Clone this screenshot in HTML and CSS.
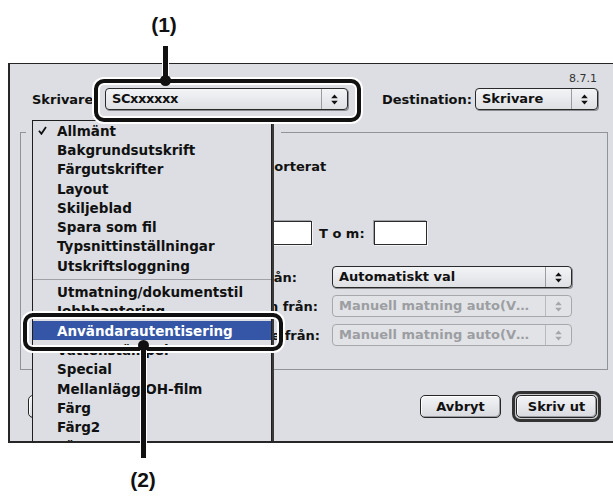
FILE: index.html
```html
<!DOCTYPE html>
<html lang="sv">
<head>
    <meta charset="UTF-8">
    <meta name="viewport" content="width=device-width, initial-scale=1.0">
    <title>Skriv ut - Användarautentisering</title>
    <link rel="stylesheet" href="styles.css">
</head>
<body>
<div class="page">

    <!-- utskriftsdialogen -->
    <div class="dialog">
        <div class="version">8.7.1</div>

        <div class="printer-row">
            <span class="printer-label">Skrivare</span>
            <div class="popup printer-popup">
                <span class="popup-text sc">SCxxxxxx</span>
                <span class="popup-arrows"><svg width="7" height="11" viewBox="0 0 7 11"><path d="M3.5 0.5L6.8 4.3H0.2Z M3.5 10.5L0.2 6.7H6.8Z"/></svg></span>
            </div>
            <span class="dest-label">Destination:</span>
            <div class="popup dest-popup">
                <span class="popup-text">Skrivare</span>
                <span class="popup-arrows"><svg width="7" height="11" viewBox="0 0 7 11"><path d="M3.5 0.5L6.8 4.3H0.2Z M3.5 10.5L0.2 6.7H6.8Z"/></svg></span>
            </div>
        </div>

        <fieldset class="panel">
            <legend class="panel-slot"></legend>

            <!-- det mesta av raderna ligger under den öppna menyn -->
            <div class="row copies-row">
                <span class="checkbox"></span>
                <span class="check-label">Sorterat</span>
            </div>

            <div class="row range-row">
                <div class="lead"></div>
                <input class="field range-from" type="text">
                <span class="to">T o m:</span>
                <input class="field range-to" type="text">
            </div>

            <div class="row source-row all-pages">
                <div class="lead">
                    <span>Alla sidor från:</span>
                </div>
                <div class="popup source-popup">
                    <span class="popup-text">Automatiskt val</span>
                    <span class="popup-arrows"><svg width="7" height="11" viewBox="0 0 7 11"><path d="M3.5 0.5L6.8 4.3H0.2Z M3.5 10.5L0.2 6.7H6.8Z"/></svg></span>
                </div>
            </div>

            <div class="row source-row first-page">
                <div class="lead">
                    <span>Första sidan från:</span>
                </div>
                <div class="popup source-popup disabled">
                    <span class="popup-text">Manuell matning auto(V…</span>
                    <span class="popup-arrows"><svg width="7" height="11" viewBox="0 0 7 11"><path d="M3.5 0.5L6.8 4.3H0.2Z M3.5 10.5L0.2 6.7H6.8Z"/></svg></span>
                </div>
            </div>

            <div class="row source-row rest-pages">
                <div class="lead">
                    <span>Återstående från:</span>
                </div>
                <div class="popup source-popup disabled">
                    <span class="popup-text">Manuell matning auto(V…</span>
                    <span class="popup-arrows"><svg width="7" height="11" viewBox="0 0 7 11"><path d="M3.5 0.5L6.8 4.3H0.2Z M3.5 10.5L0.2 6.7H6.8Z"/></svg></span>
                </div>
            </div>
        </fieldset>

        <div class="button-row">
            <button class="btn save"></button>
            <button class="btn cancel">Avbryt</button>
            <span class="default-ring"><button class="btn print">Skriv ut</button></span>
        </div>

        <!-- öppen panelmeny -->
        <ul class="menu">
            <li><span class="mark"><svg width="9" height="9" viewBox="0 0 9 9"><path d="M1 4.8L3.4 7.8L8 1" fill="none" stroke="#111" stroke-width="1.8"/></svg></span>Allmänt</li>
            <li><span class="mark"></span>Bakgrundsutskrift</li>
            <li><span class="mark"></span>Färgutskrifter</li>
            <li><span class="mark"></span>Layout</li>
            <li><span class="mark"></span>Skiljeblad</li>
            <li><span class="mark"></span>Spara som fil</li>
            <li><span class="mark"></span>Typsnittinställningar</li>
            <li><span class="mark"></span>Utskriftsloggning</li>
            <li class="sep"></li>
            <li><span class="mark"></span>Utmatning/dokumentstil</li>
            <li><span class="mark"></span>Jobbhantering</li>
            <li class="active"><span class="mark"></span>Användarautentisering</li>
            <li><span class="mark"></span>Vattenstämpel</li>
            <li><span class="mark"></span>Special</li>
            <li><span class="mark"></span>Mellanlägg OH-film</li>
            <li><span class="mark"></span>Färg</li>
            <li><span class="mark"></span>Färg2</li>
            <li><span class="mark"></span>Färg3</li>
        </ul>
    </div>

    <!-- markeringar (1) och (2) -->
    <div class="tag tag-one">(1)</div>
    <div class="callout-box box-one"></div>
    <div class="callout-line line-one"></div>
    <div class="callout-dot dot-one"></div>

    <div class="callout-box box-two"></div>
    <div class="callout-line line-two"></div>
    <div class="callout-dot dot-two"></div>
    <div class="tag tag-two">(2)</div>

</div>
</body>
</html>
```

FILE: styles.css
```css
body {
    margin: 0;
    background-color: #fff;
    font-family: "DejaVu Sans", sans-serif;
    font-size: 13px;
    font-weight: bold;
    color: #111;
    overflow: hidden;
}
.page {
    position: relative;
    width: 613px;
    height: 497px;
    padding: 63px 0 0 8px;
    box-sizing: border-box;
    overflow: hidden;
}

/* dialog */
.dialog {
    position: relative;
    width: 612px;
    height: 380px;
    box-sizing: border-box;
    background-color: #dcdee3;
    border: solid #262626;
    border-width: 1px 1px 2px 2px;
    overflow: hidden;
}
.version {
    margin: 9px 22px 0 0;
    text-align: right;
    font-size: 11px;
    font-weight: normal;
    line-height: 11px;
    color: #333;
}
.printer-row {
    display: flex;
    align-items: center;
    height: 22px;
    margin-top: 4px;
    padding: 0 21px 0 22px;
}
.printer-label {
    width: 73px;
}
.printer-popup {
    width: 243px;
}
.dest-label {
    margin-left: auto;
    margin-right: 3px;
}
.dest-popup {
    width: 123px;
}

/* popupmenyer */
.popup {
    display: flex;
    height: 22px;
    box-sizing: border-box;
    border: 1px solid #2a2a2a;
    border-radius: 4px;
    background: linear-gradient(#f3f4f6, #dfe0e4);
    box-shadow: 1px 1px 0 #8a8c90;
}
.popup-text {
    flex: 1;
    padding-left: 6px;
    line-height: 20px;
    white-space: nowrap;
    overflow: hidden;
}
.popup-text.sc {
    letter-spacing: -0.4px;
}
.popup-arrows {
    width: 25px;
    border-left: 1px solid #9a9ca0;
    display: flex;
    align-items: center;
    justify-content: center;
}
.popup-arrows svg {
    fill: #111;
}
.popup.disabled {
    border-color: #a6a8ac;
    background: #e2e3e7;
    box-shadow: none;
    color: #9c9ea2;
}
.popup.disabled .popup-arrows {
    border-left-color: #b8babe;
}
.popup.disabled .popup-arrows svg {
    fill: #a4a6aa;
}

/* panelens ram */
.panel {
    margin: 11px 0 0 10px;
    width: 588px;
    height: 249px;
    box-sizing: border-box;
    padding: 0 0 0 5px;
    border: 1px solid #909398;
    min-width: 0;
}
.panel-slot {
    padding: 0;
    width: 255px;
    height: 22px;
}
.row {
    display: flex;
    align-items: center;
    padding-left: 14px;
}
.field {
    box-sizing: border-box;
    height: 24px;
    margin: 0;
    padding: 0 4px;
    border: 1px solid #2a2a2a;
    background-color: #fff;
    box-shadow: -1px -1px 0 #a0a2a6, 1px 1px 0 #f4f4f6;
    font: inherit;
}
.checkbox {
    display: inline-block;
    width: 12px;
    height: 12px;
    box-sizing: border-box;
    border: 1px solid #333;
    background-color: #fff;
}
.copies-row {
    height: 22px;
    margin-top: 12px;
}
.copies-row .checkbox {
    margin-left: 209px;
}
.check-label {
    margin-left: 4px;
}
.range-row {
    height: 24px;
    margin-top: 44px;
}
.range-row .lead {
    width: 222px;
}
.lead {
    box-sizing: border-box;
    display: flex;
    align-items: center;
    justify-content: flex-end;
    white-space: nowrap;
}
.range-from {
    width: 50px;
}
.to {
    width: 62px;
    padding-left: 7px;
    box-sizing: border-box;
}
.range-to {
    width: 53px;
}
.source-row {
    height: 22px;
    margin-top: 7px;
}
.source-row .lead {
    width: 292px;
}
.source-row.all-pages {
    margin-top: 21px;
}
.all-pages .lead {
    padding-right: 35px;
}
.first-page .lead {
    padding-right: 14px;
}
.rest-pages .lead {
    padding-right: 12px;
}
.source-popup {
    width: 240px;
}

/* knappar */
.button-row {
    display: flex;
    align-items: center;
    height: 31px;
    margin-top: 21px;
    padding: 0 18px;
}
.btn {
    height: 23px;
    box-sizing: border-box;
    padding: 0;
    border: 1px solid #262626;
    border-radius: 5px;
    background: linear-gradient(#f3f4f6, #d9dadf);
    box-shadow: inset 1px 1px 0 #fff, inset -1px -1px 0 #9a9ca1;
    font: inherit;
    color: #111;
    line-height: 21px;
}
.btn.save {
    width: 160px;
}
.btn.cancel {
    width: 81px;
    margin-left: auto;
    margin-right: 11px;
}
.default-ring {
    display: flex;
    width: 89px;
    height: 31px;
    box-sizing: border-box;
    padding: 1px;
    border: 3px solid #333;
    border-radius: 8px;
    background-color: #c9cbd0;
}
.btn.print {
    width: 81px;
}

/* meny */
.menu {
    position: absolute;
    left: 22px;
    top: 56px;
    width: 240px;
    margin: 0;
    padding: 0;
    list-style: none;
    box-sizing: border-box;
    background-color: #dcdee3;
    border: 1px solid #1e1e1e;
    border-bottom: none;
    box-shadow: 2px 0 0 #3a3a3a;
    font-size: 13.5px;
}
.menu li {
    display: flex;
    align-items: center;
    height: 19.3px;
    padding-left: 5px;
    white-space: nowrap;
}
.menu .mark {
    width: 19px;
    display: flex;
    align-items: center;
}
.menu li.sep {
    height: 0;
    padding: 0;
    margin: 4px 0 2px;
    border-top: 1px solid #9fa1a6;
}
.menu li.active {
    background-color: #3556a6;
    color: #fff;
}

/* markeringar */
.tag {
    position: absolute;
    width: 34px;
    text-align: center;
    font-family: "Liberation Sans", Arial, sans-serif;
    font-size: 21px;
    font-weight: bold;
    color: #111;
}
.tag-one {
    left: 147px;
    top: 13px;
}
.tag-two {
    left: 126px;
    top: 468px;
}
.callout-box {
    position: absolute;
    box-sizing: border-box;
    border: 4px solid #111;
    border-radius: 10px;
    box-shadow: 0 0 0 2px #fff, inset 0 0 0 2px #fff;
}
.box-one {
    left: 94px;
    top: 79px;
    width: 267px;
    height: 43px;
}
.box-two {
    left: 23px;
    top: 313px;
    width: 260px;
    height: 38px;
}
.callout-line {
    position: absolute;
    width: 5px;
    background-color: #111;
    box-shadow: 0 0 0 1px #fff;
}
.line-one {
    left: 163px;
    top: 46px;
    height: 34px;
}
.line-two {
    left: 141px;
    top: 350px;
    height: 108px;
}
.callout-dot {
    position: absolute;
    width: 11px;
    height: 11px;
    border-radius: 50%;
    background-color: #111;
}
.dot-one {
    left: 160px;
    top: 75px;
}
.dot-two {
    left: 138px;
    top: 340px;
}
```
